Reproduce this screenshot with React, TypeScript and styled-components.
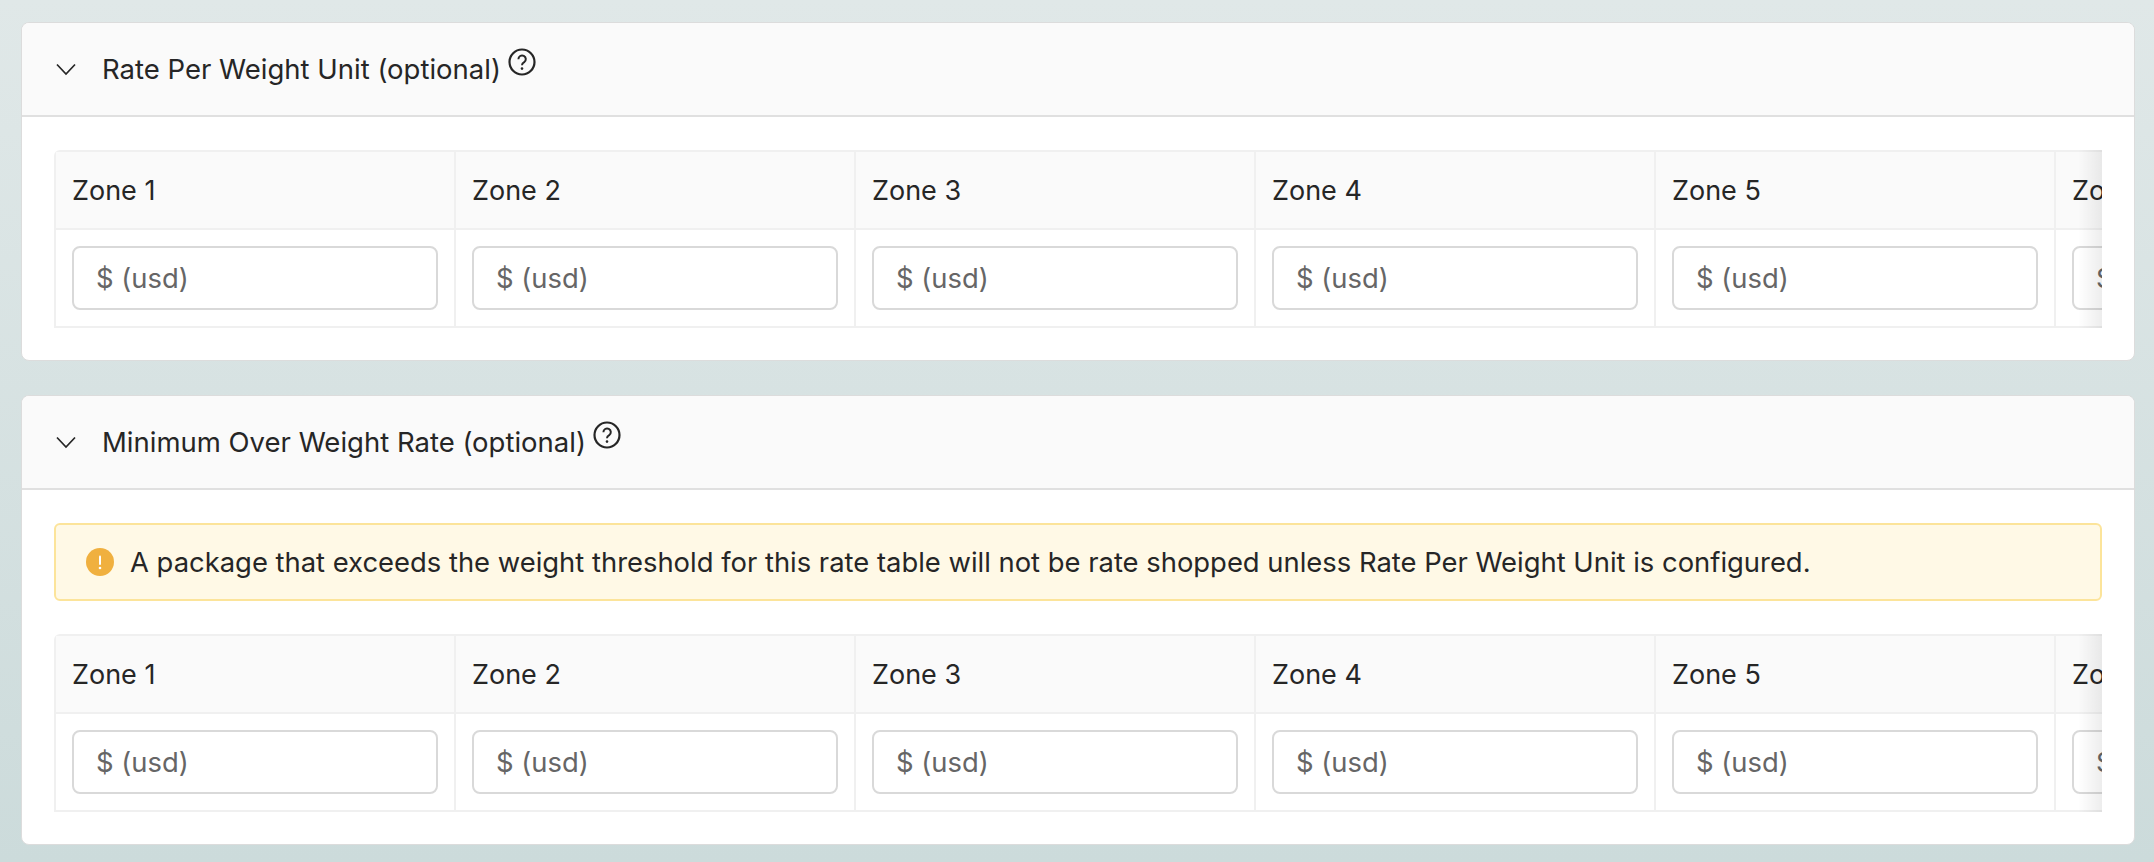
import { createGlobalStyle, styled } from "styled-components";

const GlobalStyle = createGlobalStyle`
  html, body {
    margin: 0;
    height: 100%;
  }
  body {
    background: linear-gradient(180deg, #e0e8e8 0%, #ccdbdb 100%);
    font-family: "Inter", "Liberation Sans", sans-serif;
    color: #262626;
    overflow: hidden;
  }
`;

const Page = styled.div`
  display: flex;
  flex-direction: column;
  gap: 34px;
  padding: 22px 19px 0 21px;
`;

const Card = styled.section`
  background: #fff;
  border: 1px solid #dcdcdc;
  border-radius: 8px;
  overflow: hidden;
`;

const CardHeader = styled.header`
  display: flex;
  align-items: center;
  height: 92px;
  padding: 0 35px 0 34px;
  background: #fafafa;
  border-bottom: 2px solid #e0e0e0;
`;

const Chevron = styled.svg`
  width: 20px;
  height: 13px;
  margin-right: 26px;
  flex: none;
`;

const Title = styled.h2`
  margin: 0;
  font-size: 27.5px;
  font-weight: 400;
  line-height: 36px;
`;

const HelpIcon = styled.svg`
  width: 28px;
  height: 28px;
  margin: -15px 0 0 7px;
  flex: none;
`;

const CardBody = styled.div`
  display: flex;
  flex-direction: column;
  gap: 33px;
  padding: 33px 32px 32px 32px;
`;

const Alert = styled.div`
  display: flex;
  align-items: center;
  gap: 16px;
  height: 78px;
  box-sizing: border-box;
  padding: 0 30px;
  background: #fff9e6;
  border: 2px solid #fce49a;
  border-radius: 6px;
  font-size: 27.4px;
`;

const AlertIcon = styled.svg`
  width: 28px;
  height: 28px;
  flex: none;
`;

const TableWrap = styled.div`
  position: relative;
  overflow: hidden;
  border-top-left-radius: 6px;
`;

const EdgeFade = styled.div`
  position: absolute;
  top: 0;
  right: 0;
  bottom: 0;
  width: 24px;
  background: linear-gradient(90deg, rgba(0, 0, 0, 0), rgba(0, 0, 0, 0.07));
  pointer-events: none;
`;

const ZoneGrid = styled.div`
  display: grid;
  grid-template-columns: repeat(8, 400px);
  grid-template-rows: 78px 96px;
  width: 3202px;
  box-sizing: border-box;
  border-top: 2px solid #f0f0f0;
  border-bottom: 2px solid #f0f0f0;
  border-left: 2px solid #f0f0f0;
`;

const ZoneHead = styled.div`
  display: flex;
  align-items: center;
  box-sizing: border-box;
  padding-left: 16px;
  background: #fafafa;
  border-right: 2px solid #f0f0f0;
  border-bottom: 2px solid #f0f0f0;
  font-size: 27px;
`;

const ZoneCell = styled.div`
  box-sizing: border-box;
  padding: 16px 16px 0 16px;
  border-right: 2px solid #f0f0f0;
`;

const RateInput = styled.input`
  display: block;
  width: 100%;
  height: 64px;
  box-sizing: border-box;
  padding: 0 22px;
  background: #fff;
  border: 2px solid #d9d9d9;
  border-radius: 8px;
  font: inherit;
  font-size: 27.4px;
  color: #262626;

  &::placeholder {
    color: #666;
    opacity: 1;
  }
`;

const ZONES = [1, 2, 3, 4, 5, 6, 7, 8];

const ZoneTable = () => (
  <TableWrap>
    <ZoneGrid>
      {ZONES.map((zone) => (
        <ZoneHead key={zone}>Zone {zone}</ZoneHead>
      ))}
      {ZONES.map((zone) => (
        <ZoneCell key={zone}>
          <RateInput placeholder="$ (usd)" aria-label={`Zone ${zone} rate`} />
        </ZoneCell>
      ))}
    </ZoneGrid>
    <EdgeFade />
  </TableWrap>
);

const SectionHeader = ({ title }: { title: string }) => (
  <CardHeader>
    <Chevron viewBox="0 0 20 13" fill="none" stroke="#262626" strokeWidth="1.7">
      <path d="M1 1.5 10 11 19 1.5" />
    </Chevron>
    <Title>{title}</Title>
    <HelpIcon viewBox="0 0 28 28" fill="none" stroke="#262626">
      <circle cx="14" cy="14" r="12.5" strokeWidth="2.2" />
      <path d="M10.4 11.2a3.7 3.7 0 1 1 5.8 3c-1.4.9-2.2 1.6-2.2 3" strokeWidth="2" />
      <circle cx="14" cy="20.6" r="1.3" fill="#262626" stroke="none" />
    </HelpIcon>
  </CardHeader>
);

const App = () => (
  <>
    <GlobalStyle />
    <Page>
      <Card>
        <SectionHeader title="Rate Per Weight Unit (optional)" />
        <CardBody>
          <ZoneTable />
        </CardBody>
      </Card>
      <Card>
        <SectionHeader title="Minimum Over Weight Rate (optional)" />
        <CardBody>
          <Alert>
            <AlertIcon viewBox="0 0 28 28">
              <circle cx="14" cy="14" r="14" fill="#f0b03f" />
              <rect x="13" y="7.5" width="2" height="9.5" rx="1" fill="#fff" />
              <circle cx="14" cy="20" r="1.3" fill="#fff" />
            </AlertIcon>
            A package that exceeds the weight threshold for this rate table will not be rate shopped unless Rate Per Weight Unit is configured.
          </Alert>
          <ZoneTable />
        </CardBody>
      </Card>
    </Page>
  </>
);

export default App;
